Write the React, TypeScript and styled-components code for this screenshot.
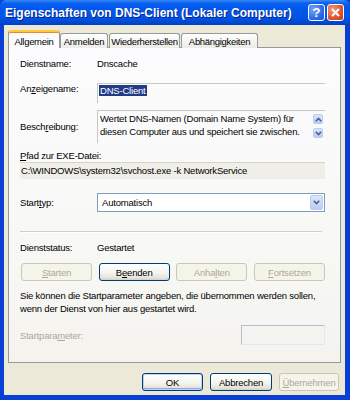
import React from "react";
import styled, { createGlobalStyle } from "styled-components";

const GlobalStyle = createGlobalStyle`
  html, body { margin: 0; padding: 0; background: #fff; }
  body {
    font-family: "Liberation Sans", Arial, sans-serif;
    font-size: 9.5px;
    letter-spacing: -0.2px;
    color: #000;
  }
`;

const Window = styled.div`
  width: 350px;
  height: 400px;
  display: flex;
  flex-direction: column;
  background: #0A3FD6;
`;

const TitleBar = styled.div`
  height: 25px;
  flex: none;
  display: flex;
  align-items: center;
  padding: 0 6px 0 5px;
  background: linear-gradient(
    180deg,
    #3D8BF5 0%,
    #0A62F0 12%,
    #0058EE 30%,
    #0055E5 70%,
    #0048D0 90%,
    #003FC0 100%
  );
  border-radius: 6px 6px 0 0;
`;

const Title = styled.div`
  flex: 1;
  color: #fff;
  font-weight: bold;
  font-size: 12px;
  letter-spacing: 0;
  text-shadow: 1px 1px 0 #0A1E8C;
  white-space: nowrap;
`;

const CaptionButton = styled.div<{ $red?: boolean }>`
  width: 17px;
  height: 17px;
  margin-left: 2px;
  box-sizing: border-box;
  border: 1px solid #fff;
  border-radius: 3px;
  display: flex;
  align-items: center;
  justify-content: center;
  color: #fff;
  font-weight: bold;
  font-size: 13px;
  letter-spacing: 0;
  background: ${(p) =>
    p.$red
      ? "radial-gradient(circle at 30% 30%, #F29A7C, #E0532E 60%, #C2381A)"
      : "radial-gradient(circle at 30% 30%, #77A6F8, #2C6BEB 60%, #1E52D8)"};
`;

const Frame = styled.div`
  flex: 1;
  background: #ECE9D8;
  border-left: 4px solid #0A3FD6;
  border-right: 5px solid #0A3FD6;
  border-bottom: 5px solid #0A3FD6;
  padding: 5px 4px 0 4px;
  display: flex;
  flex-direction: column;
`;

const TabRow = styled.div`
  display: flex;
  align-items: flex-end;
  height: 18px;
  margin-bottom: -1px;
  position: relative;
  z-index: 1;
`;

const Tab = styled.div<{ $active?: boolean; $w: number }>`
  box-sizing: border-box;
  width: ${(p) => p.$w}px;
  height: ${(p) => (p.$active ? "18px" : "15px")};
  padding-top: ${(p) => (p.$active ? "2px" : "0")};
  margin-right: ${(p) => (p.$active ? "0" : "1px")};
  border: 1px solid #919B9C;
  border-bottom: none;
  border-top: ${(p) => (p.$active ? "2px solid #FFC83C" : "1px solid #919B9C")};
  border-radius: 3px 3px 0 0;
  background: ${(p) =>
    p.$active ? "#FCFCFE" : "linear-gradient(180deg, #FFFFFF, #ECEBE6)"};
  display: flex;
  align-items: center;
  justify-content: center;
  letter-spacing: -0.3px;
  white-space: nowrap;
  box-shadow: ${(p) => (p.$active ? "inset 0 1px 0 #E68B2C" : "none")};
`;

const Panel = styled.div`
  height: 316px;
  box-sizing: border-box;
  border: 1px solid #919B9C;
  background: linear-gradient(180deg, #FCFCFE 0%, #F7F7F4 70%, #F4F3EE 100%);
  padding: 0 15px 0 11px;
  display: flex;
  flex-direction: column;
`;

const Row = styled.div<{ $top: number; $h?: number }>`
  margin-top: ${(p) => p.$top}px;
  ${(p) => (p.$h ? `height: ${p.$h}px;` : "")}
  display: grid;
  grid-template-columns: 77px 1fr;
  align-items: center;
`;

const Label = styled.span<{ $dim?: boolean; $start?: boolean }>`
  color: ${(p) => (p.$dim ? "#ACA899" : "#000")};
  white-space: nowrap;
  ${(p) => (p.$start ? "align-self: start; line-height: 12px;" : "")}
`;

const ReadOnlyEdit = styled.div`
  height: 20px;
  box-sizing: border-box;
  border-top: 1px solid #C9C8C0;
  border-left: 1px solid #C9C8C0;
  line-height: 12px;
  padding: 1px 0 0 1px;
`;

const Selected = styled.span`
  background: #233A86;
  color: #fff;
  padding: 0 1px;
`;

const DescBox = styled.div`
  height: 33px;
  box-sizing: border-box;
  border-top: 1px solid #C9C8C0;
  border-left: 1px solid #C9C8C0;
  display: flex;
  padding: 1px 2px 0 2px;
`;

const DescText = styled.div`
  flex: 1;
  line-height: 13px;
  white-space: nowrap;
`;

const ScrollButtons = styled.div`
  display: flex;
  flex-direction: column;
  gap: 4px;
  padding-top: 2px;
`;

const ArrowButton = styled.div<{ $w: number; $h: number }>`
  width: ${(p) => p.$w}px;
  height: ${(p) => p.$h}px;
  box-sizing: border-box;
  border: 1px solid #BCCBF2;
  border-radius: 2px;
  background: linear-gradient(180deg, #DCE6FD, #B9CBF6);
  display: flex;
  align-items: center;
  justify-content: center;
`;

const PathLabel = styled.div`
  margin-top: 7px;
  height: 12px;
  line-height: 12px;
`;

const PathBox = styled.div`
  height: 17px;
  box-sizing: border-box;
  background: #EFEEE7;
  border-top: 1px solid #D6D4CA;
  padding-left: 1px;
  line-height: 16px;
  white-space: nowrap;
`;

const Combo = styled.div`
  height: 19px;
  box-sizing: border-box;
  border: 1px solid #7F9DB9;
  background: #fff;
  display: flex;
  align-items: center;
  padding: 0 1px 0 4px;
`;

const ComboText = styled.span`
  flex: 1;
`;

const Separator = styled.div`
  margin-top: 19px;
  margin-right: 3px;
  height: 1px;
  background: #D0D0BF;
  border-bottom: 1px solid #fff;
`;

const ButtonRow = styled.div`
  margin-top: 9px;
  display: flex;
  justify-content: space-between;
  padding-left: 1px;
`;

const Button = styled.div<{ $disabled?: boolean; $default?: boolean; $w: number }>`
  width: ${(p) => p.$w}px;
  height: 18px;
  box-sizing: border-box;
  border-radius: 3px;
  border: 1px solid ${(p) => (p.$disabled ? "#C9C7BA" : "#003C74")};
  color: ${(p) => (p.$disabled ? "#ACA899" : "#000")};
  background: ${(p) =>
    p.$disabled
      ? "#F5F4EA"
      : "linear-gradient(180deg, #FFFFFF 0%, #F4F4F0 55%, #E6E4DB 85%, #D6D0C5 100%)"};
  box-shadow: ${(p) =>
    p.$default ? "inset 0 0 0 1px #BCD4F6, inset 0 -1px 0 1px #89ADE4" : "none"};
  display: flex;
  align-items: center;
  justify-content: center;
`;

const Info = styled.div`
  margin-top: 8px;
  line-height: 13px;
  white-space: nowrap;
`;

const ParamRow = styled.div`
  margin-top: 10px;
  display: flex;
  align-items: center;
  justify-content: space-between;
`;

const ParamInput = styled.div`
  width: 84px;
  height: 20px;
  box-sizing: border-box;
  border: 1px solid #AEBFD6;
  border-right-color: #E2E8F0;
  border-bottom-color: #E2E8F0;
`;

const Footer = styled.div`
  margin-top: 10px;
  display: flex;
  justify-content: flex-end;
  gap: 7px;
  padding-right: 2px;
`;

const Chevron = ({ up }: { up?: boolean }) => (
  <svg width="7" height="5" viewBox="0 0 7 5">
    <path
      d={up ? "M0.8 4.2 L3.5 1.5 L6.2 4.2" : "M0.8 0.8 L3.5 3.5 L6.2 0.8"}
      fill="none"
      stroke="#4D6185"
      strokeWidth="1.6"
    />
  </svg>
);

const u = (s: string) => <u>{s}</u>;

export default function App() {
  return (
    <>
      <GlobalStyle />
      <Window>
        <TitleBar>
          <Title>Eigenschaften von DNS-Client (Lokaler Computer)</Title>
          <CaptionButton>?</CaptionButton>
          <CaptionButton $red>
            <svg width="9" height="9" viewBox="0 0 9 9">
              <path d="M1 1 L8 8 M8 1 L1 8" stroke="#fff" strokeWidth="2" />
            </svg>
          </CaptionButton>
        </TitleBar>
        <Frame>
          <TabRow>
            <Tab $active $w={52}>
              Allgemein
            </Tab>
            <Tab $w={48}>Anmelden</Tab>
            <Tab $w={71}>Wiederherstellen</Tab>
            <Tab $w={77}>Abhängigkeiten</Tab>
          </TabRow>
          <Panel>
            <Row $top={8} $h={14}>
              <Label>Dienstname:</Label>
              <span>Dnscache</span>
            </Row>
            <Row $top={13}>
              <Label $start>
                An{u("z")}eigename:
              </Label>
              <ReadOnlyEdit>
                <Selected>DNS-Client</Selected>
              </ReadOnlyEdit>
            </Row>
            <Row $top={7}>
              <Label>
                Besch{u("r")}eibung:
              </Label>
              <DescBox>
                <DescText>
                  Wertet DNS-Namen (Domain Name System) für
                  <br />
                  diesen Computer aus und speichert sie zwischen.
                </DescText>
                <ScrollButtons>
                  <ArrowButton $w={10} $h={10}>
                    <Chevron up />
                  </ArrowButton>
                  <ArrowButton $w={10} $h={10}>
                    <Chevron />
                  </ArrowButton>
                </ScrollButtons>
              </DescBox>
            </Row>
            <PathLabel>
              {u("P")}fad zur EXE-Datei:
            </PathLabel>
            <PathBox>C:\WINDOWS\system32\svchost.exe -k NetworkService</PathBox>
            <Row $top={14}>
              <Label>
                Start{u("t")}yp:
              </Label>
              <Combo>
                <ComboText>Automatisch</ComboText>
                <ArrowButton $w={13} $h={15}>
                  <Chevron />
                </ArrowButton>
              </Combo>
            </Row>
            <Separator />
            <Row $top={7} $h={14}>
              <Label>Dienststatus:</Label>
              <span>Gestartet</span>
            </Row>
            <ButtonRow>
              <Button $disabled $w={71}>
                {u("S")}tarten
              </Button>
              <Button $w={71}>
                B{u("e")}enden
              </Button>
              <Button $disabled $w={71}>
                Anha{u("l")}ten
              </Button>
              <Button $disabled $w={71}>
                {u("F")}ortsetzen
              </Button>
            </ButtonRow>
            <Info>
              Sie können die Startparameter angeben, die übernommen werden sollen,
              <br />
              wenn der Dienst von hier aus gestartet wird.
            </Info>
            <ParamRow>
              <Label $dim>
                Startpara{u("m")}eter:
              </Label>
              <ParamInput />
            </ParamRow>
          </Panel>
          <Footer>
            <Button $default $w={61}>
              OK
            </Button>
            <Button $w={62}>Abbrechen</Button>
            <Button $disabled $w={60}>
              {u("Ü")}bernehmen
            </Button>
          </Footer>
        </Frame>
      </Window>
    </>
  );
}
